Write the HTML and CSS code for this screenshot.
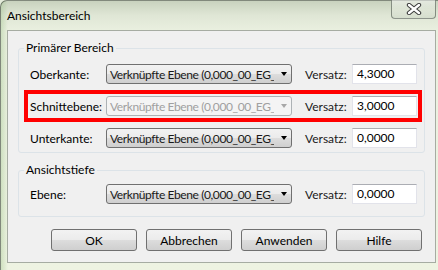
FILE: index.html
```html
<!DOCTYPE html>
<html>
<head>
    <title>Ansichtsbereich</title>
    <link rel="stylesheet" href="styles.css">
</head>
<body>
    <div id="fenster">
        <div class="titelleiste">
            <span class="titel">Ansichtsbereich</span>
            <div class="schliessen">
                <svg width="20" height="12" viewBox="0 0 20 12">
                    <path d="M5 2 L15 10 M15 2 L5 10" stroke="#3a3a3a" stroke-width="4.4" stroke-linecap="round"/>
                    <path d="M5 2 L15 10 M15 2 L5 10" stroke="#ffffff" stroke-width="2.4" stroke-linecap="round"/>
                </svg>
            </div>
        </div>
        <div class="inhalt">
            <fieldset class="gruppe gruppe-primaer">
                <legend>Primärer Bereich</legend>
                <div class="zeilen">
                    <div class="zeile">
                        <span class="beschriftung">Oberkante:</span>
                        <div class="auswahl"><span class="wert">Verknüpfte Ebene (0,000_00_EG_E</span><span class="pfeil"></span></div>
                        <span class="versatz">Versatz:</span>
                        <div class="eingabe">4,3000</div>
                    </div>
                    <div class="zeile markiert">
                        <span class="beschriftung">Schnittebene:</span>
                        <div class="auswahl gesperrt"><span class="wert">Verknüpfte Ebene (0,000_00_EG_E</span><span class="pfeil"></span></div>
                        <span class="versatz">Versatz:</span>
                        <div class="eingabe">3,0000</div>
                    </div>
                    <div class="zeile">
                        <span class="beschriftung">Unterkante:</span>
                        <div class="auswahl"><span class="wert">Verknüpfte Ebene (0,000_00_EG_E</span><span class="pfeil"></span></div>
                        <span class="versatz">Versatz:</span>
                        <div class="eingabe">0,0000</div>
                    </div>
                </div>
            </fieldset>
            <fieldset class="gruppe gruppe-tiefe">
                <legend>Ansichtstiefe</legend>
                <div class="zeile">
                    <span class="beschriftung">Ebene:</span>
                    <div class="auswahl"><span class="wert">Verknüpfte Ebene (0,000_00_EG_E</span><span class="pfeil"></span></div>
                    <span class="versatz">Versatz:</span>
                    <div class="eingabe">0,0000</div>
                </div>
            </fieldset>
            <div class="knoepfe">
                <button>OK</button>
                <button>Abbrechen</button>
                <button>Anwenden</button>
                <button>Hilfe</button>
            </div>
        </div>
    </div>
</body>
</html>
```

FILE: styles.css
```css
body{
    margin: 0;
    width: 438px;
    height: 270px;
    overflow: hidden;
    font-family: Lato, "Noto Sans", sans-serif;
    font-size: 12px;
    color: #000;
    background: #e4ebda;
}
#fenster{
    width: 445px;
    height: 276px;
    box-sizing: border-box;
    border: 1px solid rgba(40,50,40,0.55);
    border-radius: 7px 7px 0 0;
    background:
        linear-gradient(90deg, rgba(150,190,130,0.35) 0px, rgba(150,190,130,0) 7px),
        linear-gradient(180deg, #c8d2be 0px, #dfe6d5 14px, #eaf0e0 30px, #eef3e2 100%);
}
.titelleiste{
    height: 29px;
    display: flex;
    justify-content: space-between;
    align-items: flex-start;
}
.titel{
    margin: 7px 0 0 6px;
    line-height: 16px;
    font-size: 12px;
}
.schliessen{
    width: 45px;
    height: 19px;
    margin-right: 8px;
    margin-top: -1px;
    box-sizing: border-box;
    border: 1px solid rgba(60,70,60,0.55);
    border-top: none;
    border-radius: 0 0 4px 4px;
    background: linear-gradient(180deg, rgba(255,255,255,0.55), rgba(255,255,255,0.2) 50%, rgba(200,210,195,0.5));
    display: flex;
    justify-content: center;
    align-items: center;
}
.inhalt{
    width: 429px;
    height: 233px;
    box-sizing: border-box;
    margin-left: 6px;
    border: 1px solid #a6aca2;
    background: #f0f0f0;
    padding: 10px 10px 0 10px;
}
.gruppe{
    margin: 0;
    border: 1px solid #dce3e8;
    border-radius: 3px;
    padding: 9px 7px 4px 11px;
}
.gruppe legend{
    padding: 0 2px;
    margin-left: -6px;
    line-height: 14px;
}
.gruppe-tiefe{
    margin-top: 10px;
    padding-top: 7px;
    padding-bottom: 12px;
}
.zeilen{
    display: flex;
    flex-direction: column;
    gap: 12px;
}
.zeile{
    display: flex;
    align-items: center;
    height: 20px;
}
.markiert{
    border: 4px solid #ff0000;
    padding: 2px 1px 2px 2px;
    margin: -6px -5px -6px -6px;
}
.beschriftung{
    width: 76px;
    flex: none;
}
.auswahl{
    width: 186px;
    height: 20px;
    flex: none;
    box-sizing: border-box;
    border: 1px solid #707070;
    border-radius: 3px;
    background: linear-gradient(180deg, #f2f2f2 0%, #ebebeb 50%, #dddddd 50%, #cfcfcf 100%);
    display: flex;
    align-items: center;
    color: #1a1a1a;
}
.wert{
    width: 164px;
    padding-left: 3px;
    white-space: nowrap;
    overflow: hidden;
    letter-spacing: -0.4px;
}
.pfeil{
    margin-left: 7px;
    width: 0;
    height: 0;
    border-left: 3.5px solid transparent;
    border-right: 3.5px solid transparent;
    border-top: 4px solid #000;
}
.gesperrt{
    border-color: #adb2b5;
    background: #f4f4f4;
    color: #a0a0a0;
}
.gesperrt .pfeil{
    border-top-color: #a8a8a8;
}
.versatz{
    margin-left: 13px;
    width: 47px;
    flex: none;
    color: #1a1a1a;
}
.eingabe{
    width: 65px;
    height: 20px;
    flex: none;
    box-sizing: border-box;
    border: 1px solid #e2e3ea;
    border-top-color: #abadb3;
    background: #fff;
    padding-left: 4px;
    line-height: 18px;
}
.knoepfe{
    display: flex;
    justify-content: flex-end;
    gap: 9px;
    margin-top: 12px;
    padding-right: 3px;
}
.knoepfe button{
    width: 86px;
    height: 22px;
    border: 1px solid #707070;
    border-radius: 3px;
    background: linear-gradient(180deg, #f2f2f2 0%, #ebebeb 50%, #dddddd 50%, #cfcfcf 100%);
    font-family: Lato, "Noto Sans", sans-serif;
    font-size: 12px;
    color: #000;
    padding: 0;
}
```
